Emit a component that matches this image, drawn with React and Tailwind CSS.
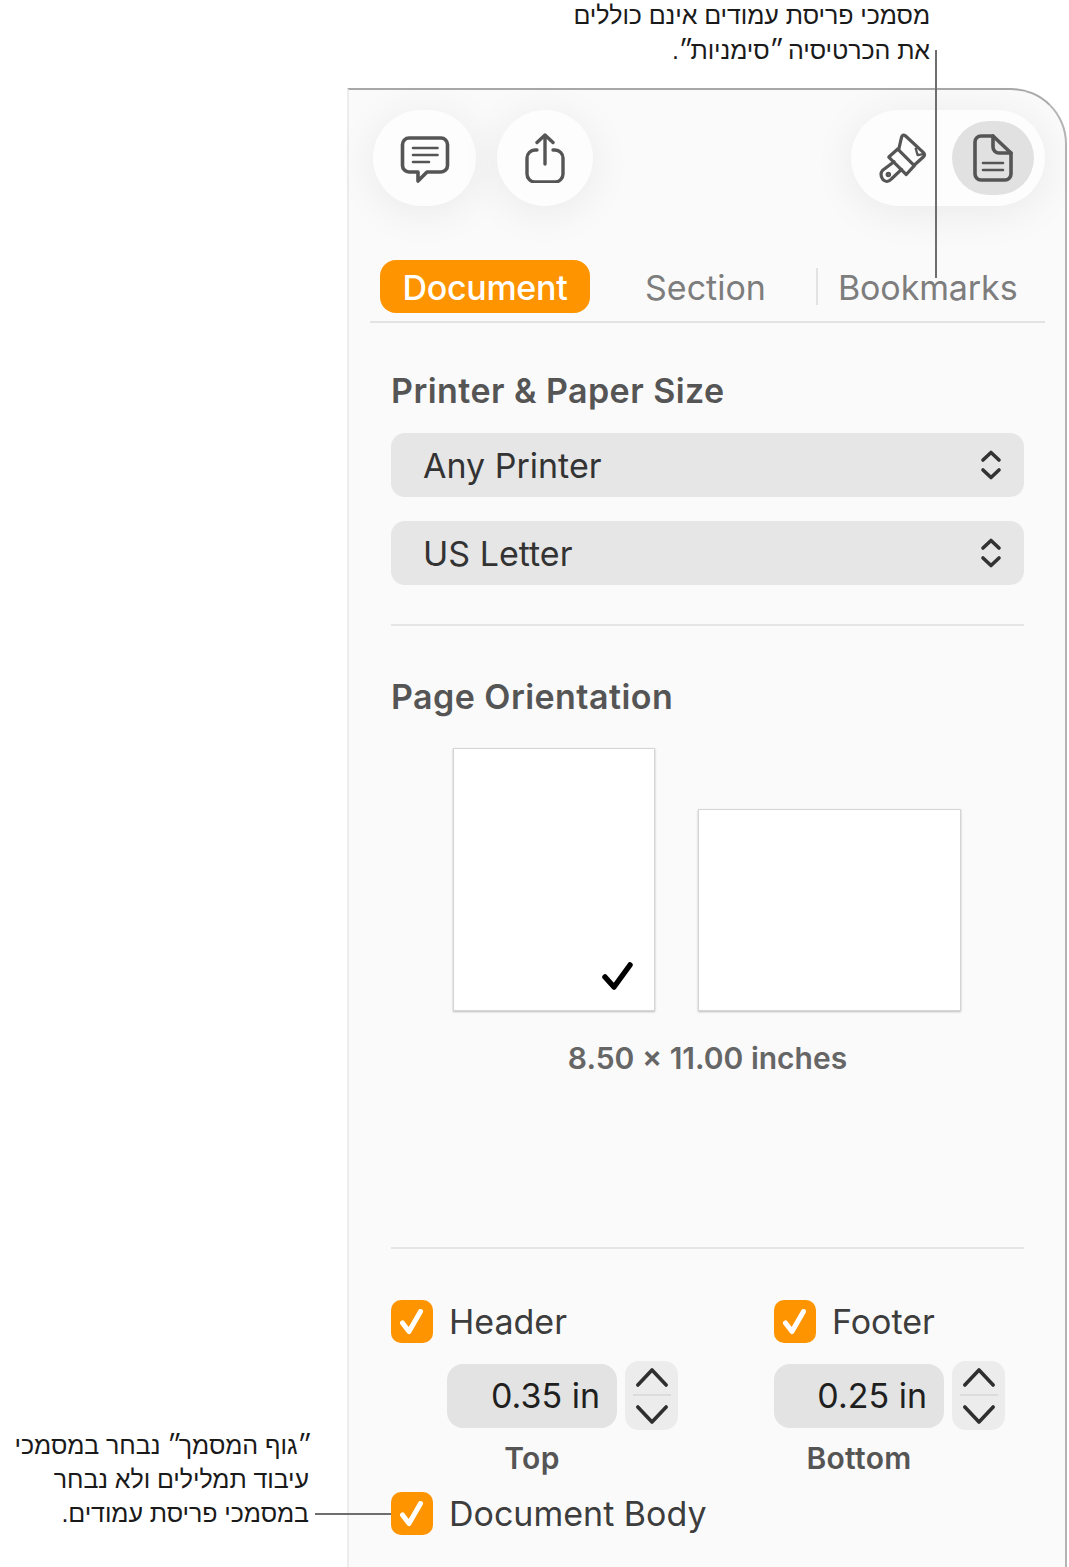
const ui = { fontFamily: 'Inter, "Liberation Sans", sans-serif' };

function Check({ className }) {
  return (
    <svg viewBox="0 0 42 42" className={className} fill="none" stroke="currentColor" strokeWidth="5" strokeLinecap="round" strokeLinejoin="round">
      <path d="M11.5 22.5 L18 31 L29.5 11" />
    </svg>
  );
}

function CheckBox() {
  return (
    <div className="w-[42px] h-[43px] rounded-[10px] bg-[#fe9500] text-white shrink-0">
      <Check className="w-[42px] h-[43px]" />
    </div>
  );
}

function CheckRow({ label, className = "" }) {
  return (
    <div className={`flex items-center gap-[16px] ${className}`}>
      <CheckBox />
      <span className="text-[34px] leading-[45px] text-[#3d3d3d]">{label}</span>
    </div>
  );
}

function SelectBox({ label, className = "" }) {
  return (
    <div className={`h-[64px] rounded-[14px] bg-[#e6e6e6] flex items-center justify-between pl-[32px] pr-[21px] ${className}`}>
      <span className="text-[34px] text-[#333333]">{label}</span>
      <svg viewBox="0 0 24 34" className="w-[24px] h-[34px]" fill="none" stroke="#333333" strokeWidth="3.6" strokeLinecap="round" strokeLinejoin="round">
        <path d="M4 12 L12 4.5 L20 12" />
        <path d="M4 22 L12 29.5 L20 22" />
      </svg>
    </div>
  );
}

function Stepper() {
  return (
    <div className="w-[53px] h-[69px] rounded-[14px] bg-[#ececec] flex flex-col items-center justify-center">
      <svg viewBox="0 0 36 22" className="w-[34px] h-[21px] mb-[6px]" fill="none" stroke="#2f2f2f" strokeWidth="3.8" strokeLinecap="round" strokeLinejoin="round">
        <path d="M3 19 L18 3 L33 19" />
      </svg>
      <div className="w-[38px] h-[2px] bg-[#dcdcdc]" />
      <svg viewBox="0 0 36 22" className="w-[34px] h-[21px] mt-[8px]" fill="none" stroke="#2f2f2f" strokeWidth="3.8" strokeLinecap="round" strokeLinejoin="round">
        <path d="M3 3 L18 19 L33 3" />
      </svg>
    </div>
  );
}

function Metric({ value, label }) {
  return (
    <div>
      <div className="flex items-center gap-[8px]">
        <div className="w-[170px] h-[64px] rounded-[16px] bg-[#e3e3e3] flex items-center justify-end pr-[17px] text-[34px] text-[#1f1f1f]">
          {value}
        </div>
        <Stepper />
      </div>
      <div className="w-[170px] text-center text-[30px] leading-[36px] font-semibold tracking-[0.3px] text-[#555555] mt-[10px]">
        {label}
      </div>
    </div>
  );
}

function Q() {
  return <span className="tracking-[-3.5px]">״</span>;
}

export default function App() {
  return (
    <div className="relative w-[1069px] h-[1567px] bg-white overflow-hidden" style={ui}>
      {/* Top callout */}
      <div dir="rtl" className="absolute left-[430px] top-[-2px] w-[500px] text-[25px] leading-[35px] tracking-[-0.07px] text-[#1a1a1a] font-['Liberation_Sans',sans-serif]">
        <div>מסמכי פריסת עמודים אינם כוללים</div>
        <div>את הכרטיסיה <Q />סימניות<Q />.</div>
      </div>
      {/* Left callout */}
      <div dir="rtl" className="absolute left-[0px] top-[1428px] w-[309px] text-[25px] leading-[34px] tracking-[-0.07px] text-[#1a1a1a] font-['Liberation_Sans',sans-serif]">
        <div><Q />גוף המסמך<Q /> נבחר במסמכי</div>
        <div>עיבוד תמלילים ולא נבחר</div>
        <div>במסמכי פריסת עמודים.</div>
      </div>

      {/* Panel */}
      <div className="ml-[347px] pt-[88px]">
        <div className="relative w-[720px] h-[1479px] bg-[#fafafa] border-l-2 border-l-[#ececec] border-t-2 border-t-[#a8a8a8] border-r-2 border-r-[#b4b4b4] rounded-tr-[56px]">
          {/* Toolbar */}
          <div className="flex items-start pt-[20px] pl-[24px] pr-[20px]">
            <div className="w-[103px] h-[96px] rounded-full bg-[#fdfdfd] shadow-[0_6px_44px_rgba(0,0,0,0.07)] flex items-center justify-center">
              <svg viewBox="0 0 50 50" className="w-[50px] h-[50px]" fill="none" stroke="#555555" strokeWidth="3.6" strokeLinecap="round" strokeLinejoin="round">
                <path d="M9 5 H41 A6.5 6.5 0 0 1 47.5 11.5 V32.5 A6.5 6.5 0 0 1 41 39 H27 L18 48 V39 H9 A6.5 6.5 0 0 1 2.5 32.5 V11.5 A6.5 6.5 0 0 1 9 5 Z" />
                <path d="M13 15 H37.5 M13 22 H37.5 M13 29 H29" strokeWidth="2.6" />
              </svg>
            </div>
            <div className="ml-[21px] w-[96px] h-[96px] rounded-full bg-[#fdfdfd] shadow-[0_6px_44px_rgba(0,0,0,0.07)] flex items-center justify-center">
              <svg viewBox="0 0 42 50" className="w-[42px] h-[50px]" fill="none" stroke="#555555" strokeWidth="3.4" strokeLinecap="round" strokeLinejoin="round">
                <path d="M13 17 H11 A8 8 0 0 0 3 25 V41 A8 8 0 0 0 11 49 H31 A8 8 0 0 0 39 41 V25 A8 8 0 0 0 31 17 H29" />
                <path d="M21 31 V2 M13 9.5 L21 2 L29 9.5" />
              </svg>
            </div>
            <div className="ml-auto w-[194px] h-[96px] rounded-full bg-[#fdfdfd] shadow-[0_6px_44px_rgba(0,0,0,0.07)] flex items-center pl-[26px] pr-[11px]">
              <svg viewBox="0 0 54 56" className="w-[51px] h-[56px]" fill="none" stroke="#555555" strokeWidth="3.4" strokeLinecap="round" strokeLinejoin="round">
                <path d="M23 19 L26 6 Q27 2.5 30 4.5 L49 22 Q51.5 24.5 49 27 L39 36" />
                <path d="M41 18 L43 25 L49 24" strokeWidth="2.4" />
                <path d="M12.5 27 L22 18.5 L39.5 36 L31 45.5 Z" />
                <path d="M18 32 L6 41 Q2.5 45 6 50.5 Q10.5 55.5 15.5 50 L26 40" />
                <circle cx="12" cy="45.5" r="1.6" strokeWidth="2.6" />
              </svg>
              <div className="ml-auto w-[82px] h-[74px] rounded-full bg-[#e1e1e1] flex items-center justify-center">
                <svg viewBox="0 0 40 50" className="w-[40px] h-[50px]" fill="none" stroke="#555555" strokeWidth="3.6" strokeLinecap="round" strokeLinejoin="round">
                  <path d="M8 3 H20 L38 20 V41 A6 6 0 0 1 32 47 H8 A6 6 0 0 1 2 41 V9 A6 6 0 0 1 8 3 Z" />
                  <path d="M20 3 V14 A6 6 0 0 0 26 20 H38" />
                  <path d="M10 30 H30 M10 37 H30" strokeWidth="2.6" />
                </svg>
              </div>
            </div>
          </div>

          {/* Tabs */}
          <div className="mt-[54px] ml-[21px] mr-[20px] h-[63px] border-b-2 border-[#e3e3e3] flex items-start text-[34px] leading-[55px]">
            <div className="ml-[10px] w-[210px] h-[53px] rounded-[16px] bg-[#fe9500] text-white text-center font-medium tracking-[-0.3px]">Document</div>
            <div className="ml-[55px] text-[#7d7d7d]">Section</div>
            <div className="ml-[50px] mt-[8px] w-[2px] h-[37px] bg-[#e3e3e3]" />
            <div className="ml-[20px] tracking-[-0.1px] text-[#7d7d7d]">Bookmarks</div>
          </div>

          {/* Body */}
          <div className="ml-[42px] mr-[41px]">
            <div className="mt-[46px] text-[34px] leading-[44px] font-semibold tracking-[0.45px] text-[#555555]">Printer &amp; Paper Size</div>
            <SelectBox label="Any Printer" className="mt-[20px]" />
            <SelectBox label="US Letter" className="mt-[24px]" />
            <div className="mt-[39px] h-[2px] bg-[#e5e5e5]" />
            <div className="mt-[49px] text-[34px] leading-[44px] font-semibold tracking-[0.45px] text-[#555555]">Page Orientation</div>

            <div className="mt-[29px] pl-[62px] flex items-end gap-[43px]">
              <div className="relative w-[202px] h-[263px] bg-white border border-[#d5d5d5] shadow-[0_1px_2px_rgba(0,0,0,0.25)]">
                <svg viewBox="0 0 32 30" className="absolute right-[20px] bottom-[18px] w-[32px] h-[30px]" fill="none" stroke="#000000" strokeWidth="5.5" strokeLinecap="round" strokeLinejoin="round">
                  <path d="M3 15 L12 25 L28 3" />
                </svg>
              </div>
              <div className="w-[263px] h-[202px] bg-white border border-[#d5d5d5] shadow-[0_1px_2px_rgba(0,0,0,0.25)]" />
            </div>
            <div className="mt-[28px] text-center text-[30px] leading-[38px] font-semibold text-[#666666]">8.50 × 11.00 inches</div>

            <div className="mt-[170px] h-[2px] bg-[#e5e5e5]" />

            <div className="mt-[50px] flex">
              <div className="w-[383px]">
                <CheckRow label="Header" />
                <div className="ml-[56px] mt-[17px]">
                  <Metric value="0.35 in" label="Top" />
                </div>
              </div>
              <div>
                <CheckRow label="Footer" />
                <div className="mt-[17px]">
                  <Metric value="0.25 in" label="Bottom" />
                </div>
              </div>
            </div>
            <CheckRow label="Document Body" className="mt-[15px]" />
          </div>
        </div>
      </div>

      {/* Leader lines */}
      <div className="absolute left-[935px] top-[50px] w-[2px] h-[228px] bg-[#6e6e6e]" />
      <div className="absolute left-[315px] top-[1513px] w-[76px] h-[2px] bg-[#6e6e6e]" />
    </div>
  );
}
